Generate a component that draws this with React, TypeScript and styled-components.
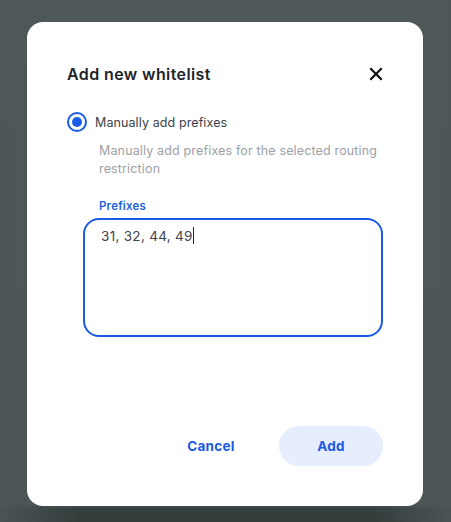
import React from "react";
import styled, { createGlobalStyle } from "styled-components";

const Global = createGlobalStyle`
  html, body { margin: 0; padding: 0; }
  body {
    background: #4d5757;
    font-family: Inter, "Noto Sans", sans-serif;
    -webkit-font-smoothing: antialiased;
  }
`;

const Backdrop = styled.div`
  position: relative;
  width: 451px;
  height: 522px;
  box-sizing: border-box;
  padding: 22px 28px 16px 27px;
  background:
    linear-gradient(90deg, rgba(77, 87, 87, 0.9) 0%, rgba(77, 87, 87, 0) 18%, rgba(77, 87, 87, 0) 82%, rgba(77, 87, 87, 0.9) 100%),
    linear-gradient(180deg, #4f5959 0%, #4c5656 96.5%, #333e3d 97.5%, #323c3b 100%);
  display: flex;
  align-items: flex-start;
`;

const Dialog = styled.div`
  width: 396px;
  height: 484px;
  box-sizing: border-box;
  background: #ffffff;
  border-radius: 16px;
  padding: 40px;
  display: flex;
  flex-direction: column;
`;

const Header = styled.div`
  display: flex;
  align-items: center;
  justify-content: space-between;
  height: 24px;
`;

const Title = styled.h2`
  margin: 0;
  font-size: 16px;
  font-weight: 600;
  color: #1f2428;
  letter-spacing: 0.4px;
`;

const CloseButton = styled.button`
  border: 0;
  background: transparent;
  padding: 0;
  width: 24px;
  height: 24px;
  margin-right: -5px;
  display: flex;
  align-items: center;
  justify-content: center;
  cursor: pointer;
`;

const RadioRow = styled.label`
  margin-top: 26px;
  display: flex;
  align-items: center;
  gap: 8px;
  height: 20px;
`;

const RadioOuter = styled.span`
  width: 20px;
  height: 20px;
  box-sizing: border-box;
  border: 2px solid #1a5be6;
  border-radius: 50%;
  display: flex;
  align-items: center;
  justify-content: center;
`;

const RadioDot = styled.span`
  width: 10px;
  height: 10px;
  border-radius: 50%;
  background: #1a5be6;
`;

const RadioText = styled.span`
  font-size: 12.5px;
  color: #3b424b;
  letter-spacing: 0.1px;
`;

const Description = styled.p`
  margin: 10px 0 0 32px;
  font-size: 12.5px;
  line-height: 18px;
  color: #9ca1a8;
  letter-spacing: 0.15px;
`;

const Field = styled.div`
  margin: 21px 0 0 16px;
  display: flex;
  flex-direction: column;
`;

const FieldLabel = styled.span`
  margin-left: 16px;
  font-size: 11.5px;
  font-weight: 600;
  color: #1f5fe0;
  letter-spacing: 0.2px;
  line-height: 14px;
`;

const TextBox = styled.div`
  margin-top: 5px;
  width: 300px;
  height: 119px;
  box-sizing: border-box;
  border: 2px solid #1a5be6;
  border-radius: 16px;
  padding: 7px 16px;
  font-size: 13.5px;
  color: #3d444c;
  letter-spacing: 0.3px;
  line-height: 18px;
`;

const Caret = styled.span`
  display: inline-block;
  width: 1px;
  height: 17px;
  background: #1f2428;
  vertical-align: -3px;
`;

const Footer = styled.div`
  margin-top: auto;
  display: flex;
  justify-content: flex-end;
  gap: 16px;
`;

const Button = styled.button<{ $primary?: boolean }>`
  width: 104px;
  height: 40px;
  border: 0;
  border-radius: 20px;
  background: ${(p) => (p.$primary ? "#e6edfc" : "transparent")};
  color: #1a5be6;
  font-family: Inter, "Noto Sans", sans-serif;
  font-size: 13.5px;
  font-weight: 700;
  letter-spacing: 0.3px;
  cursor: pointer;
`;

export default function App() {
  return (
    <>
      <Global />
      <Backdrop>
        <Dialog>
          <Header>
            <Title>Add new whitelist</Title>
            <CloseButton aria-label="Close">
              <svg width="14" height="14" viewBox="0 0 14 14">
                <path d="M2 2 L12 12 M12 2 L2 12" stroke="#111" strokeWidth="2.2" strokeLinecap="square" />
              </svg>
            </CloseButton>
          </Header>
          <RadioRow>
            <RadioOuter>
              <RadioDot />
            </RadioOuter>
            <RadioText>Manually add prefixes</RadioText>
          </RadioRow>
          <Description>
            Manually add prefixes for the selected routing
            <br />
            restriction
          </Description>
          <Field>
            <FieldLabel>Prefixes</FieldLabel>
            <TextBox>
              31, 32, 44, 49
              <Caret />
            </TextBox>
          </Field>
          <Footer>
            <Button>Cancel</Button>
            <Button $primary>Add</Button>
          </Footer>
        </Dialog>
      </Backdrop>
    </>
  );
}
